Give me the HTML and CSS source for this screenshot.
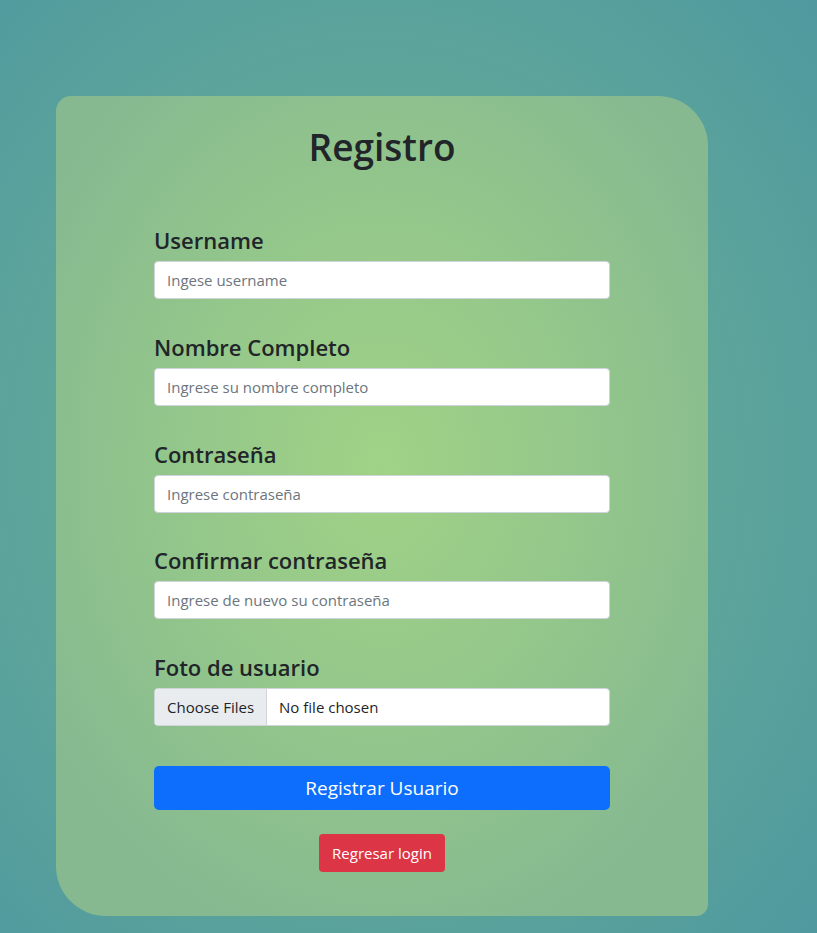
FILE: index.html
```html
<!DOCTYPE html>
<html lang="es">
<head>
<meta charset="utf-8">
<title>Registro</title>
<link rel="stylesheet" href="styles.css">
</head>
<body>
<main class="page">
  <section class="card">
    <h1 class="title">Registro</h1>
    <form class="form">
      <div class="group">
        <label class="label" for="u">Username</label>
        <input class="input" id="u" type="text" placeholder="Ingese username">
      </div>
      <div class="group">
        <label class="label" for="n">Nombre Completo</label>
        <input class="input" id="n" type="text" placeholder="Ingrese su nombre completo">
      </div>
      <div class="group">
        <label class="label" for="p">Contraseña</label>
        <input class="input" id="p" type="password" placeholder="Ingrese contraseña">
      </div>
      <div class="group">
        <label class="label" for="c">Confirmar contraseña</label>
        <input class="input" id="c" type="password" placeholder="Ingrese de nuevo su contraseña">
      </div>
      <div class="group group-last">
        <label class="label">Foto de usuario</label>
        <div class="file">
          <span class="file-btn">Choose Files</span>
          <span class="file-name">No file chosen</span>
        </div>
      </div>
      <button class="btn-primary" type="button">Registrar Usuario</button>
      <div class="back-row">
        <button class="btn-danger" type="button">Regresar login</button>
      </div>
    </form>
  </section>
</main>
</body>
</html>
```
FILE: styles.css
```css
* { box-sizing: border-box; }
html, body { margin: 0; height: 100%; }
body {
  font-family: "Open Sans", "Noto Sans", sans-serif;
  color: #212529;
  background: radial-gradient(ellipse 75% 75% at 46% 50%, #73b496 0%, #5fa79a 50%, #4f989f 100%);
  background-attachment: fixed;
}
.page {
  padding: 96px 0 0 56px;
}
.card {
  width: 652px;
  height: 820px;
  border-radius: 15px 50px 12px 50px;
  background: radial-gradient(ellipse 60% 60% at 50% 45%, #a0d286 0%, #93c68b 55%, #86b990 100%);
  padding: 27px 98px 0;
  display: flex;
  flex-direction: column;
}
.title {
  margin: 0;
  text-align: center;
  font-size: 37px;
  line-height: 48px;
  font-weight: 600;
}
.form {
  margin-top: 54px;
  display: flex;
  flex-direction: column;
}
.group {
  display: flex;
  flex-direction: column;
  gap: 6px;
  margin-bottom: 32.75px;
}
.group-last { margin-bottom: 40px; }
.label {
  font-size: 22px;
  line-height: 30px;
  font-weight: 600;
}
.input, .file {
  height: 38px;
  width: 100%;
  border: 1px solid #ced4da;
  border-radius: 4px;
  background: #fff;
  font-family: inherit;
  font-size: 15px;
  padding: 0 12px;
  color: #212529;
  outline: none;
}
.input::placeholder { color: #6c757d; }
.file {
  display: flex;
  align-items: stretch;
  padding: 0;
  overflow: hidden;
}
.file-btn {
  display: flex;
  align-items: center;
  padding: 0 12px;
  background: #e9ecef;
  border-right: 1px solid #ced4da;
  color: #212529;
}
.file-name {
  display: flex;
  align-items: center;
  padding-left: 12px;
}
.btn-primary {
  height: 44px;
  border: none;
  border-radius: 5px;
  background: #0d6efd;
  color: #fff;
  font-family: inherit;
  font-size: 19px;
}
.back-row {
  display: flex;
  justify-content: center;
  margin-top: 24px;
}
.btn-danger {
  height: 38px;
  padding: 0 13px;
  border: none;
  border-radius: 4px;
  background: #dc3545;
  color: #fff;
  font-family: inherit;
  font-size: 15px;
}
```
